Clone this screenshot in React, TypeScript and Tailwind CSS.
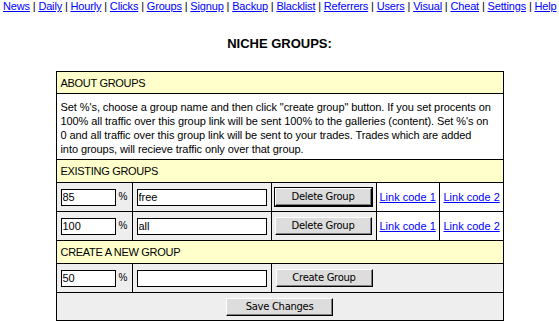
import React from "react";

const navItems = [
  "News",
  "Daily",
  "Hourly",
  "Clicks",
  "Groups",
  "Signup",
  "Backup",
  "Blacklist",
  "Referrers",
  "Users",
  "Visual",
  "Cheat",
  "Settings",
  "Help",
];

function Btn({ label, focus, w }: { label: string; focus?: boolean; w: string }) {
  return (
    <button
      className={`${w} h-[18px] bg-[#dddddd] border border-t-white border-l-white border-b-black border-r-black shadow-[inset_-1px_-1px_0_#808080] font-['DejaVu_Sans',sans-serif] text-[10px] tracking-[-0.3px] leading-[14px] text-black p-0 ${
        focus ? "outline outline-1 outline-black" : ""
      }`}
    >
      {label}
    </button>
  );
}

function PctCell({ value }: { value: string }) {
  return (
    <div className="w-[75px] bg-[#eeeeee] flex items-center pl-[4px]">
      <input
        defaultValue={value}
        className="w-[55px] h-[17px] border border-black bg-white px-[1px] text-[11px] leading-[15px] outline-none font-['Liberation_Sans',sans-serif]"
      />
      <span className="ml-[3px] text-[10px]">%</span>
    </div>
  );
}

function NameCell({ value }: { value: string }) {
  return (
    <div className="w-[139px] border-l border-black bg-[#eeeeee] flex items-center pl-[4px]">
      <input
        defaultValue={value}
        className="w-[130px] h-[17px] border border-black bg-white px-[1px] text-[11px] leading-[15px] outline-none font-['Liberation_Sans',sans-serif]"
      />
    </div>
  );
}

function GroupRow({ pct, name, focus }: { pct: string; name: string; focus?: boolean }) {
  return (
    <div className="h-[29px] border-t border-black flex">
      <PctCell value={pct} />
      <NameCell value={name} />
      <div className="w-[105px] border-l border-black bg-[#eeeeee] flex items-center pl-[3px]">
        <Btn label="Delete Group" focus={focus} w="w-[97px]" />
      </div>
      <div className="w-[63px] border-l border-black bg-white flex items-center pl-[3px]">
        <a href="#" className="text-[#0000ff] underline">
          Link code 1
        </a>
      </div>
      <div className="flex-1 border-l border-black bg-white flex items-center pl-[4px]">
        <a href="#" className="text-[#0000ff] underline">
          Link code 2
        </a>
      </div>
    </div>
  );
}

export default function App() {
  return (
    <div className="w-[559px] h-[324px] bg-white text-black font-['Liberation_Sans',Arial,sans-serif] overflow-hidden">
      <div className="h-[12px] pl-[3px] text-[11px] tracking-[-0.16px] leading-[12px] whitespace-nowrap">
        {navItems.map((n, i) => (
          <React.Fragment key={n}>
            {i > 0 && <span> | </span>}
            <a href="#" className="text-[#0000ff] underline">
              {n}
            </a>
          </React.Fragment>
        ))}
      </div>
      <div className="mt-[24px] text-center font-bold text-[13px] leading-[15px]">NICHE GROUPS:</div>
      <div className="mx-auto mt-[20px] w-[448px] border border-black text-[11px] leading-[14px]">
        <div className="h-[21px] bg-[#ffffcc] flex items-center pl-[4px] tracking-[-0.3px]">ABOUT GROUPS</div>
        <div className="h-[66px] border-t border-black bg-white px-[4px] pt-[6px] whitespace-nowrap tracking-[-0.08px]">
          Set %'s, choose a group name and then click "create group" button. If you set procents on
          <br />
          100% all traffic over this group link will be sent 100% to the galleries (content). Set %'s on
          <br />
          0 and all traffic over this group link will be sent to your trades. Trades which are added
          <br />
          into groups, will recieve traffic only over that group.
        </div>
        <div className="h-[23px] border-t border-black bg-[#ffffcc] flex items-center pl-[4px] tracking-[-0.3px]">
          EXISTING GROUPS
        </div>
        <GroupRow pct="85" name="free" focus />
        <GroupRow pct="100" name="all" />
        <div className="h-[23px] border-t border-black bg-[#ffffcc] flex items-center pl-[4px] tracking-[-0.3px]">
          CREATE A NEW GROUP
        </div>
        <div className="h-[29px] border-t border-black flex">
          <PctCell value="50" />
          <NameCell value="" />
          <div className="flex-1 border-l border-black bg-[#eeeeee] flex items-center pl-[4px]">
            <Btn label="Create Group" w="w-[97px]" />
          </div>
        </div>
        <div className="h-[28px] border-t border-black bg-[#eeeeee] flex items-center justify-center">
          <Btn label="Save Changes" w="w-[107px]" />
        </div>
      </div>
    </div>
  );
}
